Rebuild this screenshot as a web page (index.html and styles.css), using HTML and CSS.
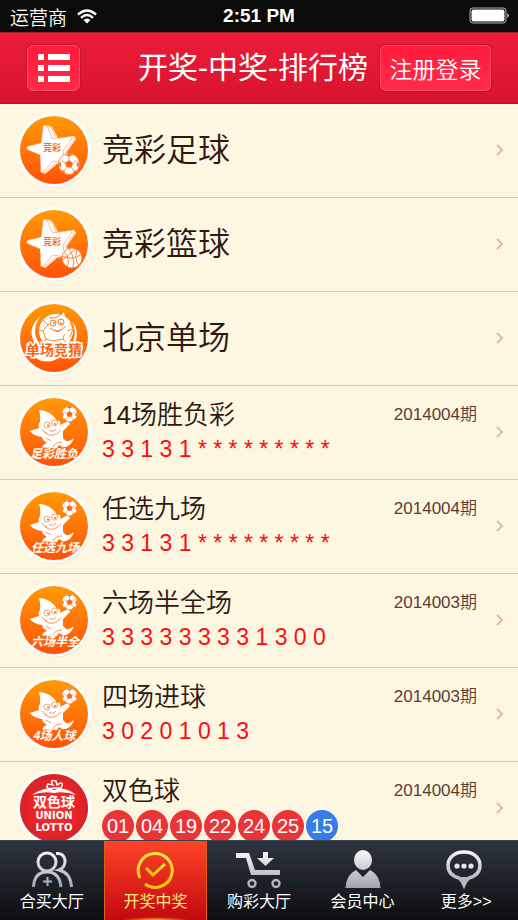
FILE: index.html
```html
<!DOCTYPE html>
<html lang="zh-CN">
<head>
    <meta charset="UTF-8">
    <meta name="viewport" content="width=device-width, initial-scale=1">
    <title>开奖-中奖-排行榜</title>
    <link rel="stylesheet" href="styles.css">
</head>
<body>
    <!-- shared drawings -->
    <svg class="defs" aria-hidden="true">
        <defs>
            <linearGradient id="orange" x1="0" y1="0" x2="0" y2="1">
                <stop offset="0" stop-color="#ff9a05"/>
                <stop offset="1" stop-color="#ff5208"/>
            </linearGradient>
            <radialGradient id="red">
                <stop offset="0" stop-color="#f33a35"/>
                <stop offset="0.7" stop-color="#ea2226"/>
                <stop offset="1" stop-color="#d3252b"/>
            </radialGradient>
            <linearGradient id="silver" gradientUnits="userSpaceOnUse" x1="0" y1="0" x2="0" y2="40">
                <stop offset="0" stop-color="#f8f9fb"/>
                <stop offset="1" stop-color="#9b9fa8"/>
            </linearGradient>
            <linearGradient id="gold" x1="0" y1="0" x2="0" y2="1">
                <stop offset="0" stop-color="#ffe94a"/>
                <stop offset="1" stop-color="#ffc400"/>
            </linearGradient>
        </defs>
        <symbol id="disc" viewBox="0 0 76 76">
            <circle cx="39" cy="39.500" r="36" fill="#e6dcc6" opacity="0.8"/>
            <circle cx="38" cy="38" r="37" fill="#fff"/>
            <circle cx="38" cy="38" r="34" fill="url(#orange)"/>
        </symbol>
        <symbol id="football" viewBox="-12 -12 24 24">
            <circle r="10.500" fill="#fff" stroke="#fb7a25" stroke-width="0.800"/>
            <path d="M0-4 4-1 2.500 3.500H-2.500L-4-1ZM-4-9 0-7.500 4-9 0-10ZM9-3 7.500 1 9 4 10 0ZM-9-3-7.500 1-9 4-10 0ZM3 9.500 5.500 6.500 8 6 6 8.500ZM-3 9.500-5.500 6.500-8 6-6 8.500Z" fill="#fb6a18"/>
            <path d="M0-4V-7.500M4-1 7.500-3.500M2.500 3.500 5 7M-2.500 3.500-5 7M-4-1-7.500-3.500" stroke="#fb7a25" stroke-width="0.800"/>
        </symbol>
        <symbol id="star" viewBox="0 0 76 76">
            <path d="M31 13 36 15 42 26 58 24 60 27 51 40 52 49 41 52 29 62 25 60 32 30Z" fill="#fff"/>
            <path d="M31 14 35.500 16 41 27M57 25 58 28 50 40 50.500 48M28 61 40 51.500 47 53" fill="none" stroke="#fc7c20" stroke-width="0.500"/>
            <path d="M27 14Q28 12 31 14L36.500 27 54 24.500Q57 24.500 55 28L47 39 49 51 37 49 27 60.500Q24 62 24.500 57L24 43 12 38Q9 36 12 34L25 31Z" fill="#fff" stroke="#fc7c20" stroke-width="0.500"/>
        </symbol>
        <symbol id="mascot" viewBox="0 0 76 76">
            <path d="M23 16C31 16 38 21 41 27 44 26 45 28 44 31L52 27 54 30 47 37 47 44 50 47Q54 48 58 44 55 53 47 53.500L43 51 41 54 26 53.500Q27 50 31 49L27 46 26 43Q18 42 13.500 37L23 34Q22 30 24 28 25 22 23 16Z" fill="#fff"/>
            <circle cx="31" cy="31" r="3" fill="#fff" stroke="#fb7a20" stroke-width="0.700"/>
            <circle cx="38.500" cy="29" r="3" fill="#fff" stroke="#fb7a20" stroke-width="0.700"/>
            <circle cx="32" cy="31.500" r="1" fill="#fb6a18"/>
            <circle cx="39" cy="30" r="1" fill="#fb6a18"/>
            <path d="M29 39Q37 45 45 36M26 35Q27 38 31 39M33 36Q37 39 40 35M30 44 35 47M37 53Q39 48 46 48" fill="none" stroke="#fb6a18" stroke-width="0.700"/>
            <use href="#football" x="44.500" y="11" width="18" height="18"/>
        </symbol>
    </svg>

    <div class="status-bar">
        <div class="carrier">
            <span>运营商</span>
            <svg class="wifi" viewBox="0 0 20 15" aria-hidden="true">
                <path d="M1 5.500Q10-2.500 19 5.500M4 8.800Q10 3.400 16 8.800" fill="none" stroke="#fff" stroke-width="2.400"/>
                <path d="M6.500 11Q10 8 13.500 11L10 14.500Z" fill="#fff"/>
            </svg>
        </div>
        <div class="clock">2:51 PM</div>
        <svg class="battery" viewBox="0 0 42 18" aria-hidden="true">
            <rect x="1" y="1" width="36" height="15" rx="3" fill="none" stroke="#b5b5b5" stroke-width="1"/>
            <rect x="2.500" y="2.500" width="33" height="12" rx="2" fill="#fff"/>
            <path d="M38.500 6Q41 8.500 38.500 11Z" fill="#fff"/>
        </svg>
    </div>

    <header class="nav-bar">
        <button type="button" class="nav-button menu-button" aria-label="菜单">
            <svg viewBox="0 0 32 28" aria-hidden="true">
                <path d="M0 0H6V6H0ZM10 0H32V6H10ZM0 11H6V17H0ZM10 11H32V17H10ZM0 22H6V28H0ZM10 22H32V28H10Z" fill="#fff"/>
            </svg>
        </button>
        <h1>开奖-中奖-排行榜</h1>
        <button type="button" class="nav-button login-button">注册登录</button>
    </header>

    <main class="lottery-list">
        <a class="row" href="#">
            <svg class="logo" viewBox="0 0 76 76" aria-hidden="true">
                <use href="#disc"/>
                <use href="#star"/>
                <text x="36" y="39" class="star-text">竞彩</text>
                <use href="#football" x="41" y="40" width="24" height="24"/>
            </svg>
            <div class="info"><h2 class="big">竞彩足球</h2></div>
            <svg class="arrow" viewBox="0 0 8 12"><path d="M1 1 6 6 1 11"/></svg>
        </a>
        <a class="row" href="#">
            <svg class="logo" viewBox="0 0 76 76" aria-hidden="true">
                <use href="#disc"/>
                <use href="#star"/>
                <text x="36" y="39" class="star-text">竞彩</text>
                <circle cx="56" cy="52" r="10" fill="#fff" stroke="#fb7a25" stroke-width="0.800"/>
                <path d="M46.500 50Q56 55 65.500 48M53 42.500Q59 51 57 62M48 46Q55 53 51 61M61 43.500Q58 54 63 59M46.500 54Q52 49 60 43" fill="none" stroke="#fb7a25" stroke-width="0.900"/>
            </svg>
            <div class="info"><h2 class="big">竞彩篮球</h2></div>
            <svg class="arrow" viewBox="0 0 8 12"><path d="M1 1 6 6 1 11"/></svg>
        </a>
        <a class="row" href="#">
            <svg class="logo" viewBox="0 0 76 76" aria-hidden="true">
                <use href="#disc"/>
                <path d="M25 16C14 24 13 36 20 45L23 43C17 35 18 24 25 16ZM17 56Q30 67 46 56Q32 59 24 55ZM56 21Q64 31 59 43L57 42Q61 31 56 21Z" fill="#fff"/>
                <circle cx="40" cy="31" r="17" fill="#fff"/>
                <path d="M27 20 32 25 27 31 23 30M27 31 30 39 37 41M30 39 27 43M49 32 56 29M49 32 47 39 51 44M47 39 37 41M54 22 57 29 54 37M32 25 37 21" fill="none" stroke="#fb8a28" stroke-width="1"/>
                <path d="M31 19Q42 19 48 12Q49 21 53 23L51 33Q44 38 34 32L33 24Z" fill="#fff"/>
                <circle cx="37" cy="23" r="3" fill="#fff" stroke="#fb7a20"/>
                <circle cx="45" cy="22" r="3" fill="#fff" stroke="#fb7a20"/>
                <circle cx="38" cy="23" r="1" fill="#fb6a18"/>
                <circle cx="45" cy="23" r="1" fill="#fb6a18"/>
                <path d="M34 28Q42 35 50 26M39 30Q43 34 45 29M33 18Q42 19 47 12" fill="none" stroke="#fb6a18" stroke-width="0.900"/>
                <text x="38" y="55" class="boxed-text">单场竞猜</text>
            </svg>
            <div class="info"><h2 class="big">北京单场</h2></div>
            <svg class="arrow" viewBox="0 0 8 12"><path d="M1 1 6 6 1 11"/></svg>
        </a>
        <a class="row" href="#">
            <svg class="logo" viewBox="0 0 76 76" aria-hidden="true">
                <use href="#disc"/>
                <use href="#mascot"/>
                <text x="38" y="64" class="logo-text">足彩胜负</text>
            </svg>
            <div class="info">
                <h2>14场胜负彩</h2>
                <p class="numbers">3 3 1 3 1 * * * * * * * * *</p>
            </div>
            <span class="issue">2014004期</span>
            <svg class="arrow" viewBox="0 0 8 12"><path d="M1 1 6 6 1 11"/></svg>
        </a>
        <a class="row" href="#">
            <svg class="logo" viewBox="0 0 76 76" aria-hidden="true">
                <use href="#disc"/>
                <use href="#mascot"/>
                <text x="39" y="64" class="logo-text">任选九场</text>
            </svg>
            <div class="info">
                <h2>任选九场</h2>
                <p class="numbers">3 3 1 3 1 * * * * * * * * *</p>
            </div>
            <span class="issue">2014004期</span>
            <svg class="arrow" viewBox="0 0 8 12"><path d="M1 1 6 6 1 11"/></svg>
        </a>
        <a class="row" href="#">
            <svg class="logo" viewBox="0 0 76 76" aria-hidden="true">
                <use href="#disc"/>
                <use href="#mascot"/>
                <text x="39" y="64" class="logo-text">六场半全</text>
            </svg>
            <div class="info">
                <h2>六场半全场</h2>
                <p class="numbers">3 3 3 3 3 3 3 3 1 3 0 0</p>
            </div>
            <span class="issue">2014003期</span>
            <svg class="arrow" viewBox="0 0 8 12"><path d="M1 1 6 6 1 11"/></svg>
        </a>
        <a class="row" href="#">
            <svg class="logo" viewBox="0 0 76 76" aria-hidden="true">
                <use href="#disc"/>
                <use href="#mascot"/>
                <text x="38" y="64" class="logo-text">4场人球</text>
            </svg>
            <div class="info">
                <h2>四场进球</h2>
                <p class="numbers">3 0 2 0 1 0 1 3</p>
            </div>
            <span class="issue">2014003期</span>
            <svg class="arrow" viewBox="0 0 8 12"><path d="M1 1 6 6 1 11"/></svg>
        </a>
        <a class="row" href="#">
            <svg class="logo" viewBox="0 0 76 76" aria-hidden="true">
                <use href="#disc"/>
                <circle cx="38" cy="38" r="34" fill="url(#red)"/>
                <path d="M16 25Q22 20 33 18L38 20 44 18Q55 20 60 25Q49 21 38 23Q27 21 16 25Z" fill="#fff"/>
                <path d="M38 18Q28 20 32 14L37 15Q33 9 40 11L41 15Q49 10 45 18Z" fill="#ea2226" stroke="#fff" stroke-width="1.500"/>
                <text x="38" y="37" class="lotto-name">双色球</text>
                <text x="38" y="49" class="lotto-latin">UNION</text>
                <text x="38" y="61" class="lotto-latin">LOTTO</text>
            </svg>
            <div class="info">
                <h2>双色球</h2>
                <div class="balls">
                    <span>01</span>
                    <span>04</span>
                    <span>19</span>
                    <span>22</span>
                    <span>24</span>
                    <span>25</span>
                    <span class="blue">15</span>
                </div>
            </div>
            <span class="issue">2014004期</span>
            <svg class="arrow" viewBox="0 0 8 12"><path d="M1 1 6 6 1 11"/></svg>
        </a>
    </main>

    <nav class="tab-bar">
        <a href="#">
            <svg viewBox="0 0 44 40" aria-hidden="true">
                <g fill="none" stroke="url(#silver)" stroke-width="3">
                    <circle cx="17" cy="12" r="9"/>
                    <path d="M3.500 37C4 27 9 22 17 22S30 27 31 37M26 3.500C37 2 38 17 29 20C37 22 41 28 41.500 37"/>
                    <path d="M17.500 27V36M13 31.500H22" stroke-width="2"/>
                </g>
            </svg>
            <span>合买大厅</span>
        </a>
        <a href="#" class="active">
            <svg viewBox="0 0 44 40" aria-hidden="true">
                <path d="M7 28A17 17 0 1 1 12 34" fill="none" stroke="url(#gold)" stroke-width="3"/>
                <path d="M13 18 20 25 32 14" fill="none" stroke="url(#gold)" stroke-width="3"/>
            </svg>
            <span>开奖中奖</span>
        </a>
        <a href="#">
            <svg viewBox="0 0 44 40" aria-hidden="true">
                <path d="M-1 3H12L18 20H43V25H14L9 8H-1ZM26 2H31V8H37L28.500 16 20 8H26Z" fill="url(#silver)"/>
                <circle cx="15" cy="33.500" r="3.500" fill="none" stroke="#b1b4bc" stroke-width="2.500"/>
                <circle cx="39" cy="33.500" r="3.500" fill="none" stroke="#b1b4bc" stroke-width="2.500"/>
            </svg>
            <span>购彩大厅</span>
        </a>
        <a href="#">
            <svg viewBox="0 0 44 40" aria-hidden="true">
                <ellipse cx="22" cy="10" rx="9" ry="10" fill="url(#silver)"/>
                <path d="M4.500 38Q5 25 15 20L22 27 29 20Q39 25 39.500 38Z" fill="url(#silver)"/>
            </svg>
            <span>会员中心</span>
        </a>
        <a href="#">
            <svg viewBox="0 0 44 40" aria-hidden="true">
                <path d="M20 2C10 2 4 8 4 15.500 4 22 8 26 15 28Q18 30 20 35Q22 30 25 28C32 26 36 22 36 15.500 36 8 30 2 20 2Z" fill="none" stroke="url(#silver)" stroke-width="3.500"/>
                <path d="M20 38 15 27H25Z" fill="#b4b7be"/>
                <circle cx="13" cy="16" r="2.600" fill="#e4e6ea"/>
                <circle cx="20" cy="16" r="2.600" fill="#e4e6ea"/>
                <circle cx="27" cy="16" r="2.600" fill="#e4e6ea"/>
            </svg>
            <span>更多&gt;&gt;</span>
        </a>
    </nav>
</body>
</html>
```
FILE: styles.css
```css
* {
    box-sizing: border-box;
}
body {
    display: flex;
    flex-direction: column;
    height: 100vh;
    margin: 0;
    background-color: #fdf6e0;
    font-family: "Liberation Sans", "Noto Sans CJK SC", sans-serif;
}
h1, h2, p {
    margin: 0;
    font-weight: normal;
}
a {
    color: inherit;
    text-decoration: none;
}
.defs {
    position: absolute;
    width: 0;
    height: 0;
}

/* status bar */
.status-bar {
    display: grid;
    grid-template-columns: 1fr auto 1fr;
    align-items: center;
    flex: none;
    height: 32px;
    padding: 0 7px;
    background-color: #0b0b09;
    color: #fff;
    font-size: 19px;
}
.carrier {
    display: flex;
    align-items: center;
    gap: 10px;
    padding-left: 3px;
    font-weight: 350;
}
.wifi {
    width: 20px;
    height: 15px;
}
.clock {
    font-weight: bold;
}
.battery {
    width: 42px;
    height: 18px;
    justify-self: end;
}

/* red navigation bar */
.nav-bar {
    display: flex;
    align-items: center;
    flex: none;
    height: 72px;
    padding: 0 27px;
    background: linear-gradient(#ec1d39, #d8132e);
    border-top: 1px solid #a01a2b;
    border-bottom: 1px solid #b5162b;
    color: #fff;
}
.nav-bar h1 {
    flex: 1;
    padding-right: 12px;
    font-size: 30px;
    font-weight: 400;
    line-height: 40px;
    text-align: right;
    white-space: nowrap;
}
.nav-button {
    display: flex;
    align-items: center;
    justify-content: center;
    height: 46px;
    padding: 0;
    background: linear-gradient(#ff1b3b, #ff2b49);
    border: 1px solid #ff5068;
    border-radius: 6px;
    box-shadow: 0 0 0 1px #c8142c;
    color: #fff;
    font-family: inherit;
    cursor: pointer;
}
.menu-button {
    width: 53px;
}
.menu-button svg {
    width: 32px;
    height: 28px;
}
.login-button {
    width: 111px;
    font-size: 23px;
    font-weight: 350;
}

/* list of lotteries */
.lottery-list {
    flex: 1;
    min-height: 0;
    overflow: hidden;
}
.row {
    display: flex;
    align-items: center;
    height: 94px;
    padding: 0 14px 2px 16px;
    border-bottom: 1px solid #e6c49c;
    color: #301713;
}
.logo {
    flex: none;
    width: 76px;
    height: 76px;
    margin-right: 10px;
}
.info {
    flex: 1;
    min-width: 0;
}
.info h2 {
    font-size: 26px;
    font-weight: 350;
    line-height: 34px;
}
.info .big {
    font-size: 32px;
}
.numbers {
    color: #f80d12;
    font-size: 23px;
    line-height: 34px;
    white-space: nowrap;
}
.balls {
    display: flex;
    gap: 2px;
    height: 34px;
    padding-top: 2px;
}
.balls span {
    width: 32px;
    height: 32px;
    border-radius: 50%;
    background-color: #e93438;
    color: #fff;
    font-size: 20px;
    line-height: 32px;
    text-align: center;
}
.balls .blue {
    background-color: #347de8;
}
.issue {
    align-self: flex-start;
    margin-right: 19px;
    padding-top: 12px;
    color: #5b3d32;
    font-size: 17px;
    font-weight: 350;
    line-height: 34px;
}
.arrow {
    flex: none;
    width: 8px;
    height: 12px;
    fill: none;
    stroke: #dfbd9a;
    stroke-width: 2;
}

/* lettering inside the round logos */
.star-text,
.logo-text,
.boxed-text,
.lotto-name {
    font-family: "Noto Sans CJK SC", sans-serif;
    font-weight: bold;
    text-anchor: middle;
}
.star-text {
    fill: #fb6f1c;
    font-size: 9px;
}
.logo-text {
    fill: #fff;
    font-size: 12px;
    font-style: italic;
}
.boxed-text {
    fill: #fb6414;
    stroke: #fff;
    stroke-width: 3px;
    paint-order: stroke;
    font-size: 14px;
}
.lotto-name {
    fill: #fff;
    font-size: 14px;
}
.lotto-latin {
    fill: #fff;
    font-family: "DejaVu Sans", sans-serif;
    font-size: 10px;
    font-weight: bold;
    text-anchor: middle;
}

/* bottom tabs */
.tab-bar {
    display: flex;
    flex: none;
    height: 80px;
    background: linear-gradient(#2e3541, #0d0e10);
    border-top: 1px solid #3d434c;
    color: #fff;
}
.tab-bar a {
    display: flex;
    flex: 1;
    flex-direction: column;
    align-items: center;
    padding-top: 9px;
    font-size: 16px;
    line-height: 24px;
}
.tab-bar svg {
    width: 44px;
    height: 40px;
    overflow: visible;
}
.tab-bar .active {
    background: radial-gradient(ellipse 34px 3px at 50% 100%, #ffae1c, transparent), linear-gradient(#ff4428, #c2090e);
    box-shadow: inset 1px 0 0 #e2600f, inset -1px 0 0 #e2600f;
    color: #ffe97a;
}
```
